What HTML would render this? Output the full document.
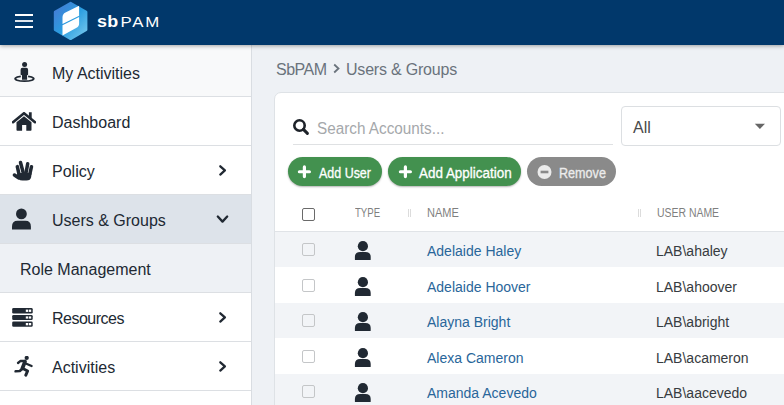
<!DOCTYPE html>
<html><head><meta charset="utf-8">
<style>
*{box-sizing:border-box;margin:0;padding:0}
html,body{width:784px;height:405px;overflow:hidden;font-family:"Liberation Sans",sans-serif;background:#eef1f5;position:relative}
.abs{position:absolute}
.hdr{position:absolute;left:0;top:0;width:784px;height:45px;background:#01386b;z-index:5;box-shadow:0 1px 4px rgba(0,0,0,.35)}
.ham{position:absolute;left:15px;width:18px;height:2px;background:#fff}
.side{position:absolute;left:0;top:45px;width:252px;height:360px;background:#fff;border-right:1px solid #d9dde2}
.item{position:absolute;left:0;width:251px;height:49px;border-bottom:1px solid #dcdfe3;color:#212933;font-size:16px}
.item .lbl{position:absolute;left:52px;top:17px;white-space:nowrap;line-height:18px}
.item svg{position:absolute}
.main{position:absolute;left:252px;top:45px;width:532px;height:360px;background:#eef1f5}
.crumb{position:absolute;top:61px;font-size:16px;color:#6a737c;white-space:nowrap;line-height:18px}
.card{position:absolute;left:274px;top:92px;width:520px;height:330px;background:#fff;border-radius:7px;border:1px solid #dee2e6}
.btn{position:absolute;top:157px;height:29px;border-radius:15px;background:#43914f;color:#fff;font-size:14px;box-shadow:0 1px 2px rgba(0,0,0,.3)}
.btn span{position:absolute;top:8px;-webkit-text-stroke:0.3px currentColor;line-height:16px;white-space:nowrap}
.th{position:absolute;top:206px;font-size:12px;color:#7f7f7f;line-height:14px;white-space:nowrap}
.row{position:absolute;left:275px;width:509px;height:36px}
.row .nm{position:absolute;left:152px;top:12px;font-size:14px;color:#29669a;line-height:16px;white-space:nowrap}
.row .un{position:absolute;left:381px;top:12px;font-size:14px;color:#373b40;line-height:16px;white-space:nowrap}
.row .in{position:absolute;left:0;width:100%;height:36px}
.row .cb{position:absolute;left:27px;top:12px;width:13px;height:13px;border:1.5px solid #c4c6c8;border-radius:2px;background:transparent}
.row svg{position:absolute;left:79px;top:10px}
</style></head><body>
<div class="hdr">
  <div class="ham" style="top:14px"></div>
  <div class="ham" style="top:20px;background:#dfe5ec"></div>
  <div class="ham" style="top:26px"></div>
  <svg class="abs" style="left:52px;top:0" width="38" height="44" viewBox="0 0 38 44">
    <defs><linearGradient id="lg" x1="0" y1="0" x2="1" y2="1">
      <stop offset="0" stop-color="#4a74d2"/><stop offset="0.5" stop-color="#2a9de0"/><stop offset="1" stop-color="#80cdef"/></linearGradient></defs>
    <path d="M18 1.9 Q18.6 1.5 19.2 1.9 L34.6 10.7 Q35.4 11.2 35.4 12.1 L35.4 29.7 Q35.4 30.6 34.6 31.1 L19.2 39.9 Q18.6 40.3 18 39.9 L2.6 31.1 Q1.8 30.6 1.8 29.7 L1.8 12.1 Q1.8 11.2 2.6 10.7 Z" fill="url(#lg)"/>
    <path d="M27.1 5.8 L27.1 15.7 L10.5 23.9 L10.5 17.3 Q10.5 14 13.5 12.6 Z" fill="#fff"/>
    <path d="M27.1 17.1 L27.1 23.4 Q27.1 26.6 24.1 28.1 L10.5 35.6 L10.5 25.3 Z" fill="#fff"/>
  </svg>
  <div class="abs" style="left:97px;top:13px;color:#fff;white-space:nowrap;line-height:18px;transform:scaleX(1.12);transform-origin:0 0"><b style="font-size:16px;letter-spacing:0.2px">sb</b><span style="font-size:15px;letter-spacing:1.6px;margin-left:2px">PAM</span></div>
</div>
<div class="side">
  <div class="item" style="top:0;height:52px;background:#f8f9fa">
    <svg style="left:13px;top:16px" width="23" height="23" viewBox="0 0 23 23">
      <circle cx="11.6" cy="3.6" r="2.5" fill="#212933"/>
      <path d="M7.6 13.8 L7.6 8.7 Q7.6 6.8 9.5 6.8 L13.2 6.8 Q15.1 6.8 15.1 8.7 L15.1 13.8 L14.1 14.3 L14.1 18.7 L9 18.7 L9 14.3 Z" fill="#212933"/>
      <path d="M7.8 15.4 A 9.35 2.5 0 1 0 15.1 15.4" fill="none" stroke="#212933" stroke-width="1.8"/>
    </svg>
    <span class="lbl" style="top:20px">My Activities</span></div>
  <div class="item" style="top:52px">
    <svg style="left:12px;top:15px" width="24" height="20" viewBox="0 0 24 20">
      <path d="M1 10.2 L12 1.2 L23 10.2" fill="none" stroke="#212933" stroke-width="2.6" stroke-linecap="round" stroke-linejoin="round"/>
      <path d="M16.9 0.2 L19.7 0.2 L19.7 7.2 L16.9 5 Z" fill="#212933"/>
      <path d="M4.5 10.2 L12 4.2 L19.5 10.2 L19.5 18 Q19.5 18.8 18.7 18.8 L14.3 18.8 L14.3 13.1 L10.1 13.1 L10.1 18.8 L5.3 18.8 Q4.5 18.8 4.5 18 Z" fill="#212933"/>
    </svg>
    <span class="lbl">Dashboard</span></div>
  <div class="item" style="top:101px">
    <svg style="left:11px;top:13px" width="24" height="23" viewBox="0 0 24 23">
      <g stroke="#212933" stroke-linecap="round" stroke-width="3.5" fill="none">
        <path d="M6.3 7.6 L8 15"/><path d="M9.5 3.5 L12.3 14"/><path d="M16.7 4.7 L15 14"/><path d="M20.5 7.7 L18.8 15"/><path d="M3.4 16 L7.5 18.8"/>
      </g>
      <path d="M6.9 14 L20.5 14 L20.2 18 Q19.5 21.6 15.5 21.6 L11.5 21.6 Q9 21.6 7.2 20 L5 17.8 Z" fill="#212933"/>
    </svg>
    <span class="lbl">Policy</span>
    <svg style="left:216px;top:18px" width="12" height="14" viewBox="0 0 12 14"><path d="M4.3 2.3 L8.9 6.45 L4.3 10.6" fill="none" stroke="#212933" stroke-width="2.3" stroke-linecap="round" stroke-linejoin="round"/></svg>
  </div>
  <div class="item" style="top:150px;background:#dde3ea">
    <svg style="left:11px;top:13px" width="21" height="22" viewBox="0 0 21 22">
      <circle cx="10.4" cy="5.9" r="5.4" fill="#212933"/>
      <path d="M1 21.5 L1 18.5 Q1 12.8 6.5 12.8 L14.4 12.8 Q19.9 12.8 19.9 18.5 L19.9 21.5 Z" fill="#212933"/>
    </svg>
    <span class="lbl">Users &amp; Groups</span>
    <svg style="left:215px;top:18px" width="15" height="12" viewBox="0 0 15 12"><path d="M2.8 3.5 L7.5 8.6 L12.2 3.5" fill="none" stroke="#212933" stroke-width="2.3" stroke-linecap="round" stroke-linejoin="round"/></svg>
  </div>
  <div class="item" style="top:199px;background:#eef1f5"><span class="lbl" style="left:20px">Role Management</span></div>
  <div class="item" style="top:248px">
    <svg style="left:12px;top:15px" width="22" height="20" viewBox="0 0 22 20">
      <rect x="0.2" y="0" width="20.5" height="5.5" rx="1.3" fill="#212933"/>
      <rect x="0.2" y="7" width="20.5" height="5" rx="1.3" fill="#212933"/>
      <rect x="0.2" y="13.4" width="20.5" height="5.4" rx="1.3" fill="#212933"/>
      <g fill="#fff"><rect x="13.8" y="1.6" width="2.5" height="2.3"/><rect x="17" y="1.6" width="2.2" height="2.3"/>
      <rect x="13.8" y="8.4" width="2.5" height="2.2"/><rect x="17" y="8.4" width="2.2" height="2.2"/>
      <rect x="13.8" y="15" width="2.5" height="2.3"/><rect x="17" y="15" width="2.2" height="2.3"/></g>
    </svg>
    <span class="lbl" style="letter-spacing:-0.5px">Resources</span>
    <svg style="left:216px;top:18px" width="12" height="14" viewBox="0 0 12 14"><path d="M4.3 2.3 L8.9 6.45 L4.3 10.6" fill="none" stroke="#212933" stroke-width="2.3" stroke-linecap="round" stroke-linejoin="round"/></svg>
  </div>
  <div class="item" style="top:297px">
    <svg style="left:14px;top:14px" width="20" height="22" viewBox="0 0 20 22">
      <circle cx="12.7" cy="1.9" r="2.1" fill="#212933"/>
      <g stroke="#212933" stroke-linecap="round" stroke-linejoin="round" fill="none">
        <path d="M4 7 L6.6 4.8 L11 5" stroke-width="2.3"/>
        <path d="M12.4 7.8 L17.6 10.1" stroke-width="2.2"/>
        <path d="M11 5.6 L8.4 12.4" stroke-width="3.8"/>
        <path d="M8 13 L5.8 15 L1.6 15.3" stroke-width="2.6"/>
        <path d="M9.8 13 L13.6 15 L11.8 19.2" stroke-width="3"/>
      </g>
    </svg>
    <span class="lbl">Activities</span>
    <svg style="left:216px;top:18px" width="12" height="14" viewBox="0 0 12 14"><path d="M4.3 2.3 L8.9 6.45 L4.3 10.6" fill="none" stroke="#212933" stroke-width="2.3" stroke-linecap="round" stroke-linejoin="round"/></svg>
  </div>
</div>
<div class="crumb" style="left:276px;letter-spacing:-0.5px">SbPAM</div>
<svg class="abs" style="left:332px;top:63px" width="9" height="11" viewBox="0 0 9 11"><path d="M2.2 1.5 L6.5 5.5 L2.2 9.5" fill="none" stroke="#6a737c" stroke-width="1.8"/></svg>
<div class="crumb" style="left:346px;letter-spacing:-0.2px">Users &amp; Groups</div>

<div class="card"></div>
<!-- search -->
<svg class="abs" style="left:292px;top:119px" width="18" height="18" viewBox="0 0 18 18">
  <circle cx="7.5" cy="6.5" r="5.2" fill="none" stroke="#1d2229" stroke-width="2.6"/>
  <path d="M11.4 10.4 L15.4 14.4" stroke="#1d2229" stroke-width="3" stroke-linecap="round"/>
</svg>
<div class="abs" style="left:317px;top:120px;font-size:16px;color:#a5a8ab;line-height:18px;white-space:nowrap;transform:scaleX(0.955);transform-origin:0 0">Search Accounts...</div>
<div class="abs" style="left:293px;top:144px;width:320px;height:1px;background:#dfe1e3"></div>
<!-- dropdown -->
<div class="abs" style="left:621px;top:106px;width:160px;height:40px;border:1px solid #dcdfe2;border-radius:4px;background:#fff"></div>
<div class="abs" style="left:633px;top:119px;font-size:16px;color:#4a4a4a;line-height:18px">All</div>
<svg class="abs" style="left:754px;top:123px" width="12" height="7" viewBox="0 0 12 7"><path d="M0.8 0.8 L11 0.8 L5.9 6 Z" fill="#666"/></svg>
<!-- buttons -->
<div class="btn" style="left:288px;width:94px">
  <svg class="abs" style="left:9px;top:8px" width="15" height="14" viewBox="0 0 15 14"><path d="M7.4 1.9 V11.6 M2.4 6.75 H12.4" stroke="#fff" stroke-width="3.2" stroke-linecap="round"/></svg>
  <span style="left:31px;transform:scaleX(0.89);transform-origin:0 0">Add User</span></div>
<div class="btn" style="left:388px;width:133px">
  <svg class="abs" style="left:10px;top:8px" width="15" height="14" viewBox="0 0 15 14"><path d="M7.4 1.9 V11.6 M2.4 6.75 H12.4" stroke="#fff" stroke-width="3.2" stroke-linecap="round"/></svg>
  <span style="left:31px;transform:scaleX(0.96);transform-origin:0 0">Add Application</span></div>
<div class="btn" style="left:527px;width:89px;background:#8a8a8a;box-shadow:none">
  <svg class="abs" style="left:10px;top:8px" width="15" height="15" viewBox="0 0 15 15"><circle cx="7.5" cy="7" r="7" fill="#ebebeb"/><rect x="3.6" y="5.7" width="7.8" height="2.6" fill="#8a8a8a"/></svg>
  <span style="left:32px;color:#ececec;transform:scaleX(0.9);transform-origin:0 0">Remove</span></div>
<!-- table header -->
<div class="abs" style="left:302px;top:208px;width:13px;height:13px;border:1.5px solid #6a6a6a;border-radius:2px"></div>
<div class="th" style="left:355px;transform:scaleX(0.8);transform-origin:0 0">TYPE</div>
<div class="abs" style="left:408px;top:209px;width:1px;height:8px;background:#dcdcdc"></div>
<div class="abs" style="left:410px;top:209px;width:1px;height:8px;background:#dcdcdc"></div>
<div class="th" style="left:427px;transform:scaleX(0.92);transform-origin:0 0">NAME</div>
<div class="abs" style="left:638px;top:209px;width:1px;height:8px;background:#dcdcdc"></div>
<div class="abs" style="left:640px;top:209px;width:1px;height:8px;background:#dcdcdc"></div>
<div class="th" style="left:657px;transform:scaleX(0.87);transform-origin:0 0">USER NAME</div>
<div class="row" style="top:231px;background:#f2f4f7"><div class="in" style="top:0px"><div class="cb"></div>
<svg width="18" height="20" viewBox="0 0 18 20"><circle cx="8.9" cy="5.2" r="5.1" fill="#212933"/><path d="M1.4 19 Q0.9 19 0.9 18.4 L0.9 16 Q0.9 10.9 6.2 10.9 L11.4 10.9 Q16.7 10.9 16.7 16 L16.7 18.4 Q16.7 19 16.1 19 Z" fill="#212933"/></svg>
<div class="nm">Adelaide Haley</div><div class="un">LAB&#92;ahaley</div></div></div>
<div class="row" style="top:267px;background:#fff"><div class="in" style="top:0px"><div class="cb"></div>
<svg width="18" height="20" viewBox="0 0 18 20"><circle cx="8.9" cy="5.2" r="5.1" fill="#212933"/><path d="M1.4 19 Q0.9 19 0.9 18.4 L0.9 16 Q0.9 10.9 6.2 10.9 L11.4 10.9 Q16.7 10.9 16.7 16 L16.7 18.4 Q16.7 19 16.1 19 Z" fill="#212933"/></svg>
<div class="nm">Adelaide Hoover</div><div class="un">LAB&#92;ahoover</div></div></div>
<div class="row" style="top:303px;background:#f2f4f7"><div class="in" style="top:-1px"><div class="cb"></div>
<svg width="18" height="20" viewBox="0 0 18 20"><circle cx="8.9" cy="5.2" r="5.1" fill="#212933"/><path d="M1.4 19 Q0.9 19 0.9 18.4 L0.9 16 Q0.9 10.9 6.2 10.9 L11.4 10.9 Q16.7 10.9 16.7 16 L16.7 18.4 Q16.7 19 16.1 19 Z" fill="#212933"/></svg>
<div class="nm">Alayna Bright</div><div class="un">LAB&#92;abright</div></div></div>
<div class="row" style="top:338px;background:#fff"><div class="in" style="top:0px"><div class="cb"></div>
<svg width="18" height="20" viewBox="0 0 18 20"><circle cx="8.9" cy="5.2" r="5.1" fill="#212933"/><path d="M1.4 19 Q0.9 19 0.9 18.4 L0.9 16 Q0.9 10.9 6.2 10.9 L11.4 10.9 Q16.7 10.9 16.7 16 L16.7 18.4 Q16.7 19 16.1 19 Z" fill="#212933"/></svg>
<div class="nm">Alexa Cameron</div><div class="un">LAB&#92;acameron</div></div></div>
<div class="row" style="top:374px;background:#f2f4f7"><div class="in" style="top:-1px"><div class="cb"></div>
<svg width="18" height="20" viewBox="0 0 18 20"><circle cx="8.9" cy="5.2" r="5.1" fill="#212933"/><path d="M1.4 19 Q0.9 19 0.9 18.4 L0.9 16 Q0.9 10.9 6.2 10.9 L11.4 10.9 Q16.7 10.9 16.7 16 L16.7 18.4 Q16.7 19 16.1 19 Z" fill="#212933"/></svg>
<div class="nm">Amanda Acevedo</div><div class="un">LAB&#92;aacevedo</div></div></div>
<div class="abs" style="left:275px;top:231px;width:509px;height:1px;background:#e0e3e7"></div>
</body></html>
